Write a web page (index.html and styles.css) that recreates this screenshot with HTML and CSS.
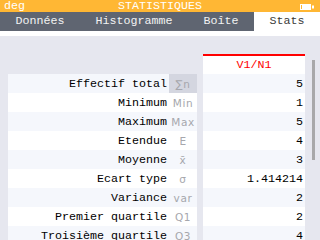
FILE: index.html
```html
<!DOCTYPE html>
<html>
<head>
<meta charset="utf-8">
<link rel="stylesheet" href="styles.css">
</head>
<body>
<div class="screen">
  <div class="titlebar">
    <span class="mode">deg</span>
    <span class="title">STATISTIQUES</span>
    <span class="battery">
      <svg width="16" height="8" viewBox="0 0 16 8">
        <rect x="1" y="1" width="11" height="6" fill="#fff"/>
        <rect x="2" y="2" width="1" height="4" fill="#ffb734"/>
        <rect x="13" y="2.5" width="2" height="3" fill="#fff"/>
      </svg>
    </span>
  </div>
  <div class="tabs">
    <div class="tab">Données</div>
    <div class="tab">Histogramme</div>
    <div class="tab">Boîte</div>
    <div class="tab active">Stats</div>
  </div>
  <div class="band"></div>
  <div class="content">
    <div class="table">
      <div class="hcorner"></div>
      <div class="hcell">V1/N1</div>

      <div class="lcell odd"><span class="lab">Effectif total</span><span class="sym sel">∑n</span></div>
      <div class="vcell odd">5</div>

      <div class="lcell"><span class="lab">Minimum</span><span class="sym">Min</span></div>
      <div class="vcell">1</div>

      <div class="lcell odd"><span class="lab">Maximum</span><span class="sym">Max</span></div>
      <div class="vcell odd">5</div>

      <div class="lcell"><span class="lab">Etendue</span><span class="sym">E</span></div>
      <div class="vcell">4</div>

      <div class="lcell odd"><span class="lab">Moyenne</span><span class="sym">x̄</span></div>
      <div class="vcell odd">3</div>

      <div class="lcell"><span class="lab">Ecart type</span><span class="sym">σ</span></div>
      <div class="vcell">1.414214</div>

      <div class="lcell odd"><span class="lab">Variance</span><span class="sym">var</span></div>
      <div class="vcell odd">2</div>

      <div class="lcell"><span class="lab">Premier quartile</span><span class="sym">Q1</span></div>
      <div class="vcell">2</div>

      <div class="lcell odd"><span class="lab">Troisième quartile</span><span class="sym">Q3</span></div>
      <div class="vcell odd">4</div>
    </div>
    <div class="scroll"><div class="thumb"></div></div>
  </div>
</div>
</body>
</html>
```

FILE: styles.css
```css
html, body {
  margin: 0;
  padding: 0;
}
body {
  width: 320px;
  height: 240px;
  overflow: hidden;
  background: #e6e7ef;
  font-family: "Liberation Mono", "DejaVu Sans Mono", monospace;
  font-size: 11.67px;
}
.screen {
  width: 320px;
  height: 240px;
  overflow: hidden;
}
.titlebar {
  height: 12px;
  background: #ffb734;
  color: #fff;
  display: grid;
  grid-template-columns: 1fr auto 1fr;
  align-items: center;
  line-height: 13px;
}
.mode {
  padding-left: 4px;
}
.battery {
  justify-self: end;
  padding-right: 5px;
  display: flex;
  align-items: center;
  height: 12px;
}
.tabs {
  height: 19px;
  background: #5f6571;
  display: flex;
  line-height: 19px;
}
.tab {
  flex: 1 1 auto;
  text-align: center;
  color: #f2f2f2;
}
.tab.active {
  background: #fff;
  color: #3a3a3a;
}
.band {
  height: 5px;
  background: #fff;
}
.content {
  display: flex;
  padding-left: 8px;
  padding-top: 18px;
}
.table {
  display: grid;
  grid-template-columns: 189px 102px;
  grid-template-rows: 20px;
  grid-auto-rows: 19px;
  column-gap: 6px;
  align-content: start;
}
.hcell {
  box-sizing: border-box;
  height: 20px;
  border-top: 2px solid #ff0000;
  padding-top: 1px;
  background: #fff;
  color: #ff0000;
  text-align: center;
  line-height: 17px;
}
.lcell, .vcell {
  box-sizing: border-box;
  height: 19px;
  padding-top: 1px;
  background: #fff;
  color: #000;
  line-height: 18px;
}
.odd {
  background: #f5f7fc;
}
.lcell {
  display: flex;
  padding-top: 0;
}
.lab {
  flex: 1;
  text-align: right;
  padding-right: 2px;
  padding-top: 1px;
  white-space: nowrap;
}
.sym {
  width: 28px;
  text-align: center;
  padding-top: 1px;
  color: #a6a7ad;
  font-family: "DejaVu Sans", sans-serif;
  font-size: 10.5px;
  letter-spacing: 0.6px;
}
.sym.sel {
  background: #d4d6e0;
}
.vcell {
  text-align: right;
  padding-right: 2px;
}
.scroll {
  width: 15px;
}
.thumb {
  margin-left: 7px;
  margin-top: 6px;
  width: 3px;
  height: 100px;
  background: #a8a8aa;
}
```
